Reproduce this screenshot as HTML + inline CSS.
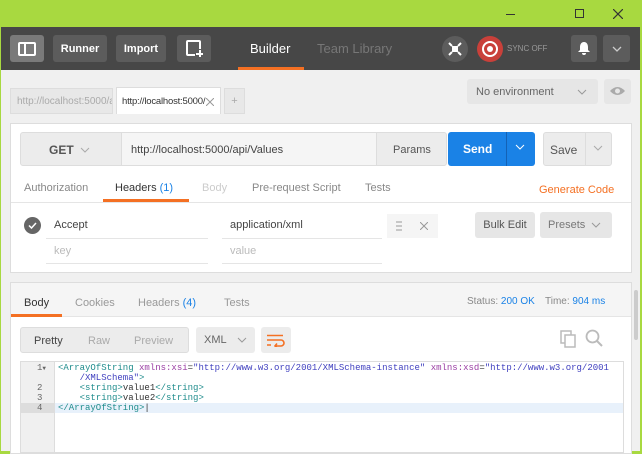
<!DOCTYPE html>
<html><head><meta charset="utf-8"><style>
*{margin:0;padding:0;box-sizing:border-box}
body{width:642px;height:452px;overflow:hidden;font-family:"Liberation Sans",sans-serif;font-size:11px;background:#a8d940;position:relative}
.a{position:absolute}
.win{left:1px;top:27px;width:639px;height:424px;background:#f0f0f0}
.tb{left:1px;top:27px;width:639px;height:43px;background:#474747}
.btn{background:#5c5c5c;border-radius:3px;color:#fff;font-weight:bold;font-size:11px;text-align:center;line-height:27px;top:35px;height:27px}
.panel{background:#fff;border:1px solid #ddd}
.mono{font-family:"Liberation Mono",monospace;font-size:9px}
svg{display:block}
</style></head><body>
<div class="a" style="left:506px;top:14px;width:9px;height:1px;background:#333"></div>
<div class="a" style="left:575px;top:9px;width:9px;height:9px;border:1px solid #333"></div>
<svg class="a" style="left:613px;top:9px" width="10" height="10"><path d="M0 0L10 10M10 0L0 10" stroke="#333" stroke-width="1.2"/></svg>
<div class="a win"></div>
<div class="a tb"></div>
<div class="a btn" style="left:10px;width:34px;background:#7a7a7a"><div class="a" style="left:8px;top:7px;width:18px;height:14px;border:2px solid #fff;border-radius:2px"></div><div class="a" style="left:14px;top:7px;width:2px;height:14px;background:#fff"></div></div>
<div class="a btn" style="left:53px;width:54px;line-height:29px">Runner</div>
<div class="a btn" style="left:116px;width:50px;line-height:29px">Import</div>
<div class="a btn" style="left:177px;width:34px"><div class="a" style="left:9px;top:5px;width:15px;height:16px;border:2px solid #fff;border-radius:2px"></div><div class="a" style="left:18px;top:14px;width:9px;height:9px;background:#5c5c5c"></div><div class="a" style="left:19px;top:18px;width:7px;height:1.5px;background:#fff"></div><div class="a" style="left:22px;top:15px;width:1.5px;height:7px;background:#fff"></div></div>
<div class="a" style="left:250px;top:41px;color:#fff;font-size:13px">Builder</div>
<div class="a" style="left:238px;top:67px;width:66px;height:3px;background:#f47023"></div>
<div class="a" style="left:317px;top:41px;color:#777;font-size:13px">Team Library</div>
<div class="a" style="left:442px;top:36px;width:26px;height:26px;border-radius:50%;background:#5c5c5c"><svg class="a" style="left:6px;top:6px" width="14" height="14"><rect x="4" y="4" width="6" height="6" fill="#fff"/><path d="M1 1l3 3M13 1l-3 3M1 13l3-3M13 13l-3-3" stroke="#fff" stroke-width="2"/></svg></div>
<div class="a" style="left:477px;top:36px;width:26px;height:26px;border-radius:50%;background:#c9403a"><div class="a" style="left:5px;top:5px;width:16px;height:16px;border:2px solid #fff;border-radius:50%"></div><div class="a" style="left:10px;top:10px;width:6px;height:6px;background:#fff;border-radius:50%"></div></div>
<div class="a" style="left:507px;top:44px;color:#999;font-size:8px">SYNC OFF</div>
<div class="a" style="left:571px;top:35px;width:26px;height:27px;background:#5c5c5c;border-radius:3px"><svg class="a" style="left:7px;top:7px" width="12" height="13"><path d="M6 0C3 0 2 3 2 5v3L0 10h12l-2-2V5C10 3 9 0 6 0zM4 11h4a2 2 0 0 1-4 0z" fill="#fff"/></svg></div>
<div class="a" style="left:603px;top:35px;width:27px;height:27px;background:#5c5c5c;border-radius:3px"><svg class="a" style="left:9px;top:11px" width="10" height="6"><path d="M1 1l4 4 4-4" stroke="#ccc" fill="none" stroke-width="1.3"/></svg></div>

<div class="a" style="left:10px;top:88px;width:103px;height:26px;background:#e8e8e8;border:1px solid #ddd;color:#aaa;font-size:10px;line-height:26px;padding-left:6px;overflow:hidden;white-space:nowrap">http://localhost:5000/api/Values</div>
<div class="a" style="left:116px;top:87px;width:105px;height:27px;background:#fff;border:1px solid #ddd;border-bottom:none;font-size:9.5px;line-height:28px;color:#333;letter-spacing:-0.2px"><span class="a" style="left:5px">http://localhost:5000/</span><svg class="a" style="left:89px;top:10px" width="8" height="8"><path d="M0 0L8 8M8 0L0 8" stroke="#999"/></svg></div>
<div class="a" style="left:224px;top:88px;width:21px;height:26px;background:#e8e8e8;border:1px solid #ddd;color:#aaa;text-align:center;line-height:24px">+</div>
<div class="a" style="left:467px;top:79px;width:131px;height:25px;background:#e6e6e6;border-radius:3px;color:#666;font-size:11px;line-height:26px;padding-left:9px">No environment<svg class="a" style="left:110px;top:10px" width="10" height="6"><path d="M1 1l4 4 4-4" stroke="#999" fill="none"/></svg></div>
<div class="a" style="left:604px;top:79px;width:27px;height:25px;background:#e6e6e6;border-radius:3px"><svg class="a" style="left:6px;top:7px" width="15" height="10"><path d="M0 5Q7.5-3 15 5Q7.5 13 0 5z" fill="#aaa"/><circle cx="7.5" cy="5" r="2.5" fill="#e6e6e6"/></svg></div>

<div class="a panel" style="left:10px;top:123px;width:622px;height:150px"></div>
<div class="a" style="left:20px;top:132px;width:427px;height:34px;background:#ececec;border:1px solid #ddd;border-radius:3px"></div>
<div class="a" style="left:49px;top:143px;font-weight:bold;color:#555;font-size:12px">GET</div>
<svg class="a" style="left:80px;top:147px" width="10" height="6"><path d="M1 1l4 4 4-4" stroke="#aaa" fill="none"/></svg>
<div class="a" style="left:121px;top:133px;width:256px;height:32px;background:#f5f5f5;border-left:1px solid #ddd;border-right:1px solid #ddd"></div>
<div class="a" style="left:131px;top:144px;color:#444;font-size:11px">http://localhost:5000/api/Values</div>
<div class="a" style="left:393px;top:144px;color:#555">Params</div>
<div class="a" style="left:448px;top:132px;width:87px;height:34px;background:#1a82e6;border-radius:3px"></div>
<div class="a" style="left:463px;top:142px;color:#fff;font-weight:bold;font-size:12px">Send</div>
<div class="a" style="left:506px;top:132px;width:1px;height:34px;background:#1462b5"></div>
<svg class="a" style="left:515px;top:144px" width="10" height="6"><path d="M1 1l4 4 4-4" stroke="#fff" fill="none"/></svg>
<div class="a" style="left:543px;top:132px;width:69px;height:34px;background:#ececec;border:1px solid #ddd;border-radius:3px"></div>
<div class="a" style="left:550px;top:143px;color:#555;font-size:12px">Save</div>
<div class="a" style="left:585px;top:133px;width:1px;height:32px;background:#ddd"></div>
<svg class="a" style="left:593px;top:145px" width="10" height="6"><path d="M1 1l4 4 4-4" stroke="#aaa" fill="none"/></svg>
<div class="a" style="left:24px;top:182px;color:#888">Authorization</div>
<div class="a" style="left:115px;top:182px;color:#333">Headers <span style="color:#1a82e6">(1)</span></div>
<div class="a" style="left:103px;top:199px;width:86px;height:3px;background:#f47023"></div>
<div class="a" style="left:202px;top:182px;color:#ccc">Body</div>
<div class="a" style="left:252px;top:182px;color:#888">Pre-request Script</div>
<div class="a" style="left:365px;top:182px;color:#888">Tests</div>
<div class="a" style="left:539px;top:184px;color:#f47023">Generate Code</div>
<div class="a" style="left:11px;top:202px;width:620px;height:1px;background:#e5e5e5"></div>
<div class="a" style="left:24px;top:217px;width:17px;height:17px;border-radius:50%;background:#666"><svg class="a" style="left:4px;top:5px" width="9" height="7"><path d="M1 3.5l2.5 2.5L8 1" stroke="#fff" fill="none" stroke-width="1.5"/></svg></div>
<div class="a" style="left:54px;top:219px;color:#444">Accept</div>
<div class="a" style="left:46px;top:238px;width:162px;height:1px;background:#e5e5e5"></div>
<div class="a" style="left:230px;top:219px;color:#444">application/xml</div>
<div class="a" style="left:222px;top:238px;width:160px;height:1px;background:#e5e5e5"></div>
<div class="a" style="left:387px;top:214px;width:51px;height:24px;background:#f5f5f5"></div>
<svg class="a" style="left:396px;top:221px" width="6" height="10"><path d="M0 1h6M0 5h6M0 9h6" stroke="#999"/></svg>
<svg class="a" style="left:420px;top:222px" width="8" height="8"><path d="M0 0L8 8M8 0L0 8" stroke="#999"/></svg>
<div class="a" style="left:54px;top:245px;color:#bbb">key</div>
<div class="a" style="left:46px;top:263px;width:162px;height:1px;background:#e5e5e5"></div>
<div class="a" style="left:230px;top:245px;color:#bbb">value</div>
<div class="a" style="left:222px;top:263px;width:160px;height:1px;background:#e5e5e5"></div>
<div class="a" style="left:475px;top:212px;width:60px;height:26px;background:#e6e6e6;border-radius:3px;color:#555;text-align:center;line-height:27px">Bulk Edit</div>
<div class="a" style="left:540px;top:212px;width:72px;height:26px;background:#e6e6e6;border-radius:3px;color:#777;line-height:27px;padding-left:8px">Presets</div>
<svg class="a" style="left:591px;top:222px" width="10" height="6"><path d="M1 1l4 4 4-4" stroke="#999" fill="none"/></svg>

<div class="a panel" style="left:10px;top:282px;width:622px;height:172px"></div>
<div class="a" style="left:11px;top:283px;width:620px;height:34px;background:#f5f5f5;border-bottom:1px solid #e5e5e5"></div>
<div class="a" style="left:24px;top:297px;color:#333">Body</div>
<div class="a" style="left:11px;top:314px;width:51px;height:3px;background:#f47023"></div>
<div class="a" style="left:75px;top:297px;color:#999">Cookies</div>
<div class="a" style="left:138px;top:297px;color:#999">Headers <span style="color:#1a82e6">(4)</span></div>
<div class="a" style="left:224px;top:297px;color:#999">Tests</div>
<div class="a" style="left:467px;top:296px;color:#888;font-size:10px">Status: <span style="color:#1a82e6">200 OK</span></div>
<div class="a" style="left:545px;top:296px;color:#888;font-size:10px">Time: <span style="color:#1a82e6">904 ms</span></div>
<div class="a" style="left:20px;top:327px;width:169px;height:26px;background:#ececec;border:1px solid #ddd;border-radius:3px"></div>
<div class="a" style="left:34px;top:335px;color:#444">Pretty</div>
<div class="a" style="left:88px;top:335px;color:#aaa">Raw</div>
<div class="a" style="left:134px;top:335px;color:#aaa">Preview</div>
<div class="a" style="left:196px;top:327px;width:59px;height:26px;background:#ececec;border-radius:3px;color:#666;line-height:27px;padding-left:8px">XML</div>
<svg class="a" style="left:237px;top:337px" width="10" height="6"><path d="M1 1l4 4 4-4" stroke="#999" fill="none"/></svg>
<div class="a" style="left:261px;top:327px;width:30px;height:26px;background:#ececec;border-radius:3px"><svg class="a" style="left:5px;top:7px" width="19" height="13"><path d="M1 1.5h16M1 6h14a3 3 0 0 1 0 6h-5M1 11h4M11 9.5l-2 2.5 2 2" stroke="#f47023" fill="none" stroke-width="1.6"/></svg></div>
<svg class="a" style="left:560px;top:330px" width="16" height="18"><rect x="1" y="1" width="10" height="12" fill="none" stroke="#bbb" stroke-width="1.5"/><rect x="5" y="5" width="10" height="12" fill="#fff" stroke="#bbb" stroke-width="1.5"/></svg>
<svg class="a" style="left:585px;top:329px" width="18" height="18"><circle cx="7.5" cy="7.5" r="6" fill="none" stroke="#bbb" stroke-width="1.8"/><path d="M12 12l5 5" stroke="#bbb" stroke-width="2"/></svg>
<div class="a" style="left:20px;top:361px;width:604px;height:92px;border:1px solid #ddd;background:#fff"></div>
<div class="a" style="left:21px;top:362px;width:34px;height:90px;background:#f0f0f0;border-right:1px solid #ddd"></div>
<div class="a" style="left:21px;top:403px;width:602px;height:10px;background:#e8f1fb"></div>
<div class="a" style="left:21px;top:403px;width:34px;height:10px;background:#ddd"></div>
<div class="a mono" style="left:37px;top:363px;color:#666;line-height:10px">1<span style="font-size:6px">&#9660;</span></div>
<div class="a mono" style="left:37px;top:383px;color:#666;line-height:10px">2<br>3<br>4</div>
<div class="a mono" style="left:58px;top:363px;line-height:10px;white-space:pre;color:#333"><span style="color:#1f8c8c">&lt;ArrayOfString</span> <span style="color:#9a3ea3">xmlns:xsi</span>=<span style="color:#3f3fbf">"http://www.w3.org/2001/XMLSchema-instance"</span> <span style="color:#9a3ea3">xmlns:xsd</span>=<span style="color:#3f3fbf">"http://www.w3.org/2001</span>
<span style="color:#3f3fbf">    /XMLSchema"</span><span style="color:#1f8c8c">&gt;</span>
    <span style="color:#1f8c8c">&lt;string&gt;</span>value1<span style="color:#1f8c8c">&lt;/string&gt;</span>
    <span style="color:#1f8c8c">&lt;string&gt;</span>value2<span style="color:#1f8c8c">&lt;/string&gt;</span>
<span style="color:#1f8c8c">&lt;/ArrayOfString&gt;</span>|</div>
<div class="a" style="left:634px;top:290px;width:4px;height:50px;background:#ccc;border-radius:2px"></div>
</body></html>
